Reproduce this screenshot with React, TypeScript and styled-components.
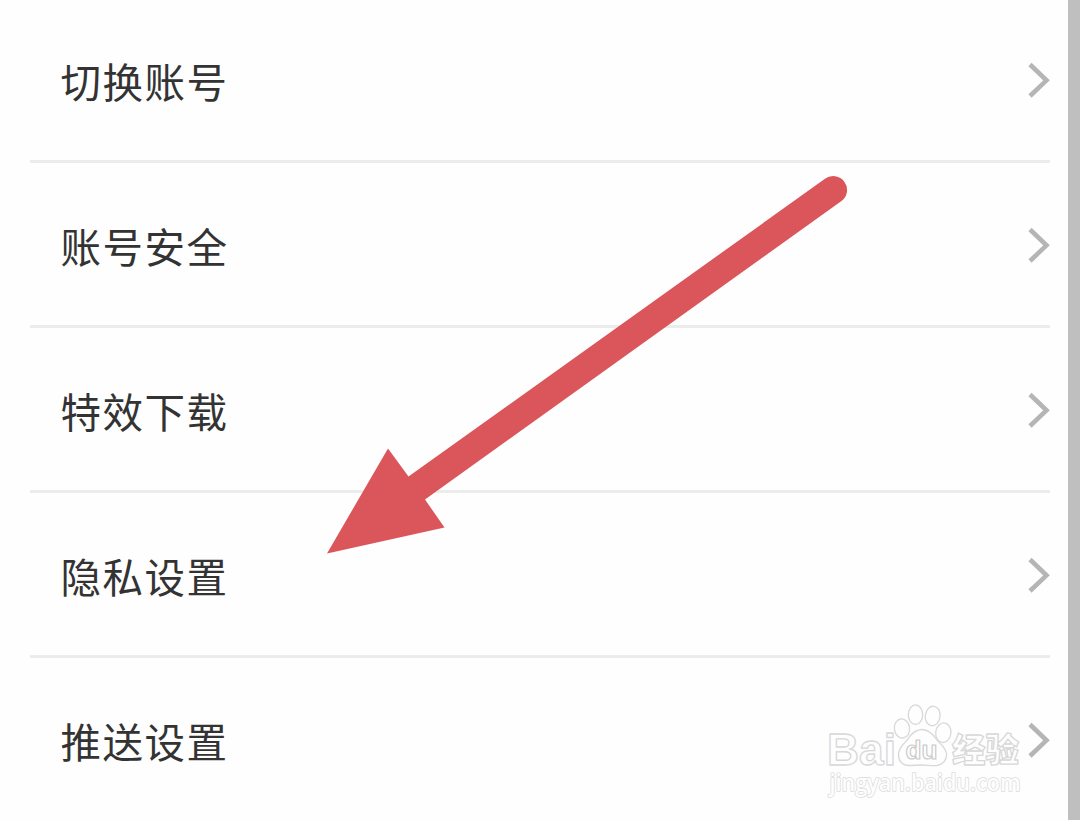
import React from "react";
import styled, { createGlobalStyle } from "styled-components";

const GlobalStyle = createGlobalStyle`
  * { box-sizing: border-box; }
  html, body { margin: 0; padding: 0; background: #fefefe; overflow: hidden; }
`;

const Screen = styled.main`
  position: relative;
  display: flex;
  width: 1080px;
  height: 820px;
  overflow: hidden;
  background: #fefefe;
  font-family: "Noto Sans CJK SC", sans-serif;
`;

const List = styled.ul`
  flex: 1;
  list-style: none;
  margin: 0;
  padding: 0 18px 0 30px;
`;

const Row = styled.li<{ $first?: boolean }>`
  display: flex;
  align-items: center;
  justify-content: space-between;
  height: ${(p) => (p.$first ? 163 : 165)}px;
  padding: ${(p) => (p.$first ? 0 : 2)}px 0 0 30.5px;
  border-bottom: 3px solid #ececec;
`;

const Label = styled.span`
  padding-top: 2px;
  font-size: 40.5px;
  letter-spacing: 1.5px;
  line-height: 60px;
  color: #333;
`;

const Chevron = styled.svg`
  display: block;
  width: 24px;
  height: 38px;
`;

const Scrollbar = styled.div`
  width: 12px;
  background: #bfbfbf;
`;

const Overlay = styled.svg`
  position: absolute;
  left: 0;
  top: 0;
  pointer-events: none;
`;

const items = ["切换账号", "账号安全", "特效下载", "隐私设置", "推送设置"];

function Watermark() {
  return (
    <g fill="#fefefe" stroke="#d8d8d8" strokeWidth="1.3" strokeLinejoin="round">
      <text x="827" y="764.5" fontFamily="Liberation Sans, sans-serif" fontWeight="700" fontSize="44.5" textLength="69" lengthAdjust="spacingAndGlyphs">Bai</text>
      <ellipse cx="902" cy="728.5" rx="7.6" ry="9.6" transform="rotate(-8 902 728.5)" />
      <ellipse cx="915.5" cy="714.7" rx="7.2" ry="9.8" />
      <ellipse cx="932.7" cy="716" rx="7.4" ry="9.8" transform="rotate(8 932.7 716)" />
      <ellipse cx="943.3" cy="732.7" rx="7.6" ry="9.8" transform="rotate(6 943.3 732.7)" />
      <path d="M922 729.5 C915 729.5 911 734 907.5 739.5 C903.5 744 898.5 748 898.5 755 C898.5 761.5 903 765.5 909 765.5 C914 765.5 917 765 922 765 C927 765 931 766 937 765.5 C943 764.5 946.8 760 946.5 754 C946 748 941 744.5 937 740 C933 734 929 729.5 922 729.5 Z" />
      <text x="905.5" y="759" fontFamily="Liberation Sans, sans-serif" fontWeight="700" fontSize="25" strokeWidth="1.1" stroke="#cacaca" textLength="32" lengthAdjust="spacingAndGlyphs">du</text>
      <text x="952" y="761.5" fontFamily="Noto Sans CJK SC, sans-serif" fontWeight="900" fontSize="33" textLength="67" lengthAdjust="spacingAndGlyphs">经验</text>
      <text x="829.5" y="790.5" fontFamily="Open Sans, sans-serif" fontWeight="600" fontSize="22.5" strokeWidth="1.5" paintOrder="stroke" stroke="#dadada" textLength="191" lengthAdjust="spacingAndGlyphs">jingyan.baidu.com</text>
    </g>
  );
}

export default function App() {
  return (
    <>
      <GlobalStyle />
      <Screen>
        <List>
          {items.map((label, i) => (
            <Row key={label} $first={i === 0}>
              <Label>{label}</Label>
              <Chevron viewBox="0 0 24 38" aria-hidden="true">
                <path d="M4 3.5 20.5 19.3 4 35" fill="none" stroke="#b5b5b5" strokeWidth="4.6" />
              </Chevron>
            </Row>
          ))}
        </List>
        <Scrollbar />
        <Overlay width="1080" height="820" viewBox="0 0 1080 820" aria-hidden="true">
          <Watermark />
          <path
            d="M327 553.5 388 448.5 408.5 476.5 825 178.8 A13.8 13.8 0 0 1 841.5 201 L425 499.5 444.5 527.5 Z"
            fill="#db565b"
          />
        </Overlay>
      </Screen>
    </>
  );
}
